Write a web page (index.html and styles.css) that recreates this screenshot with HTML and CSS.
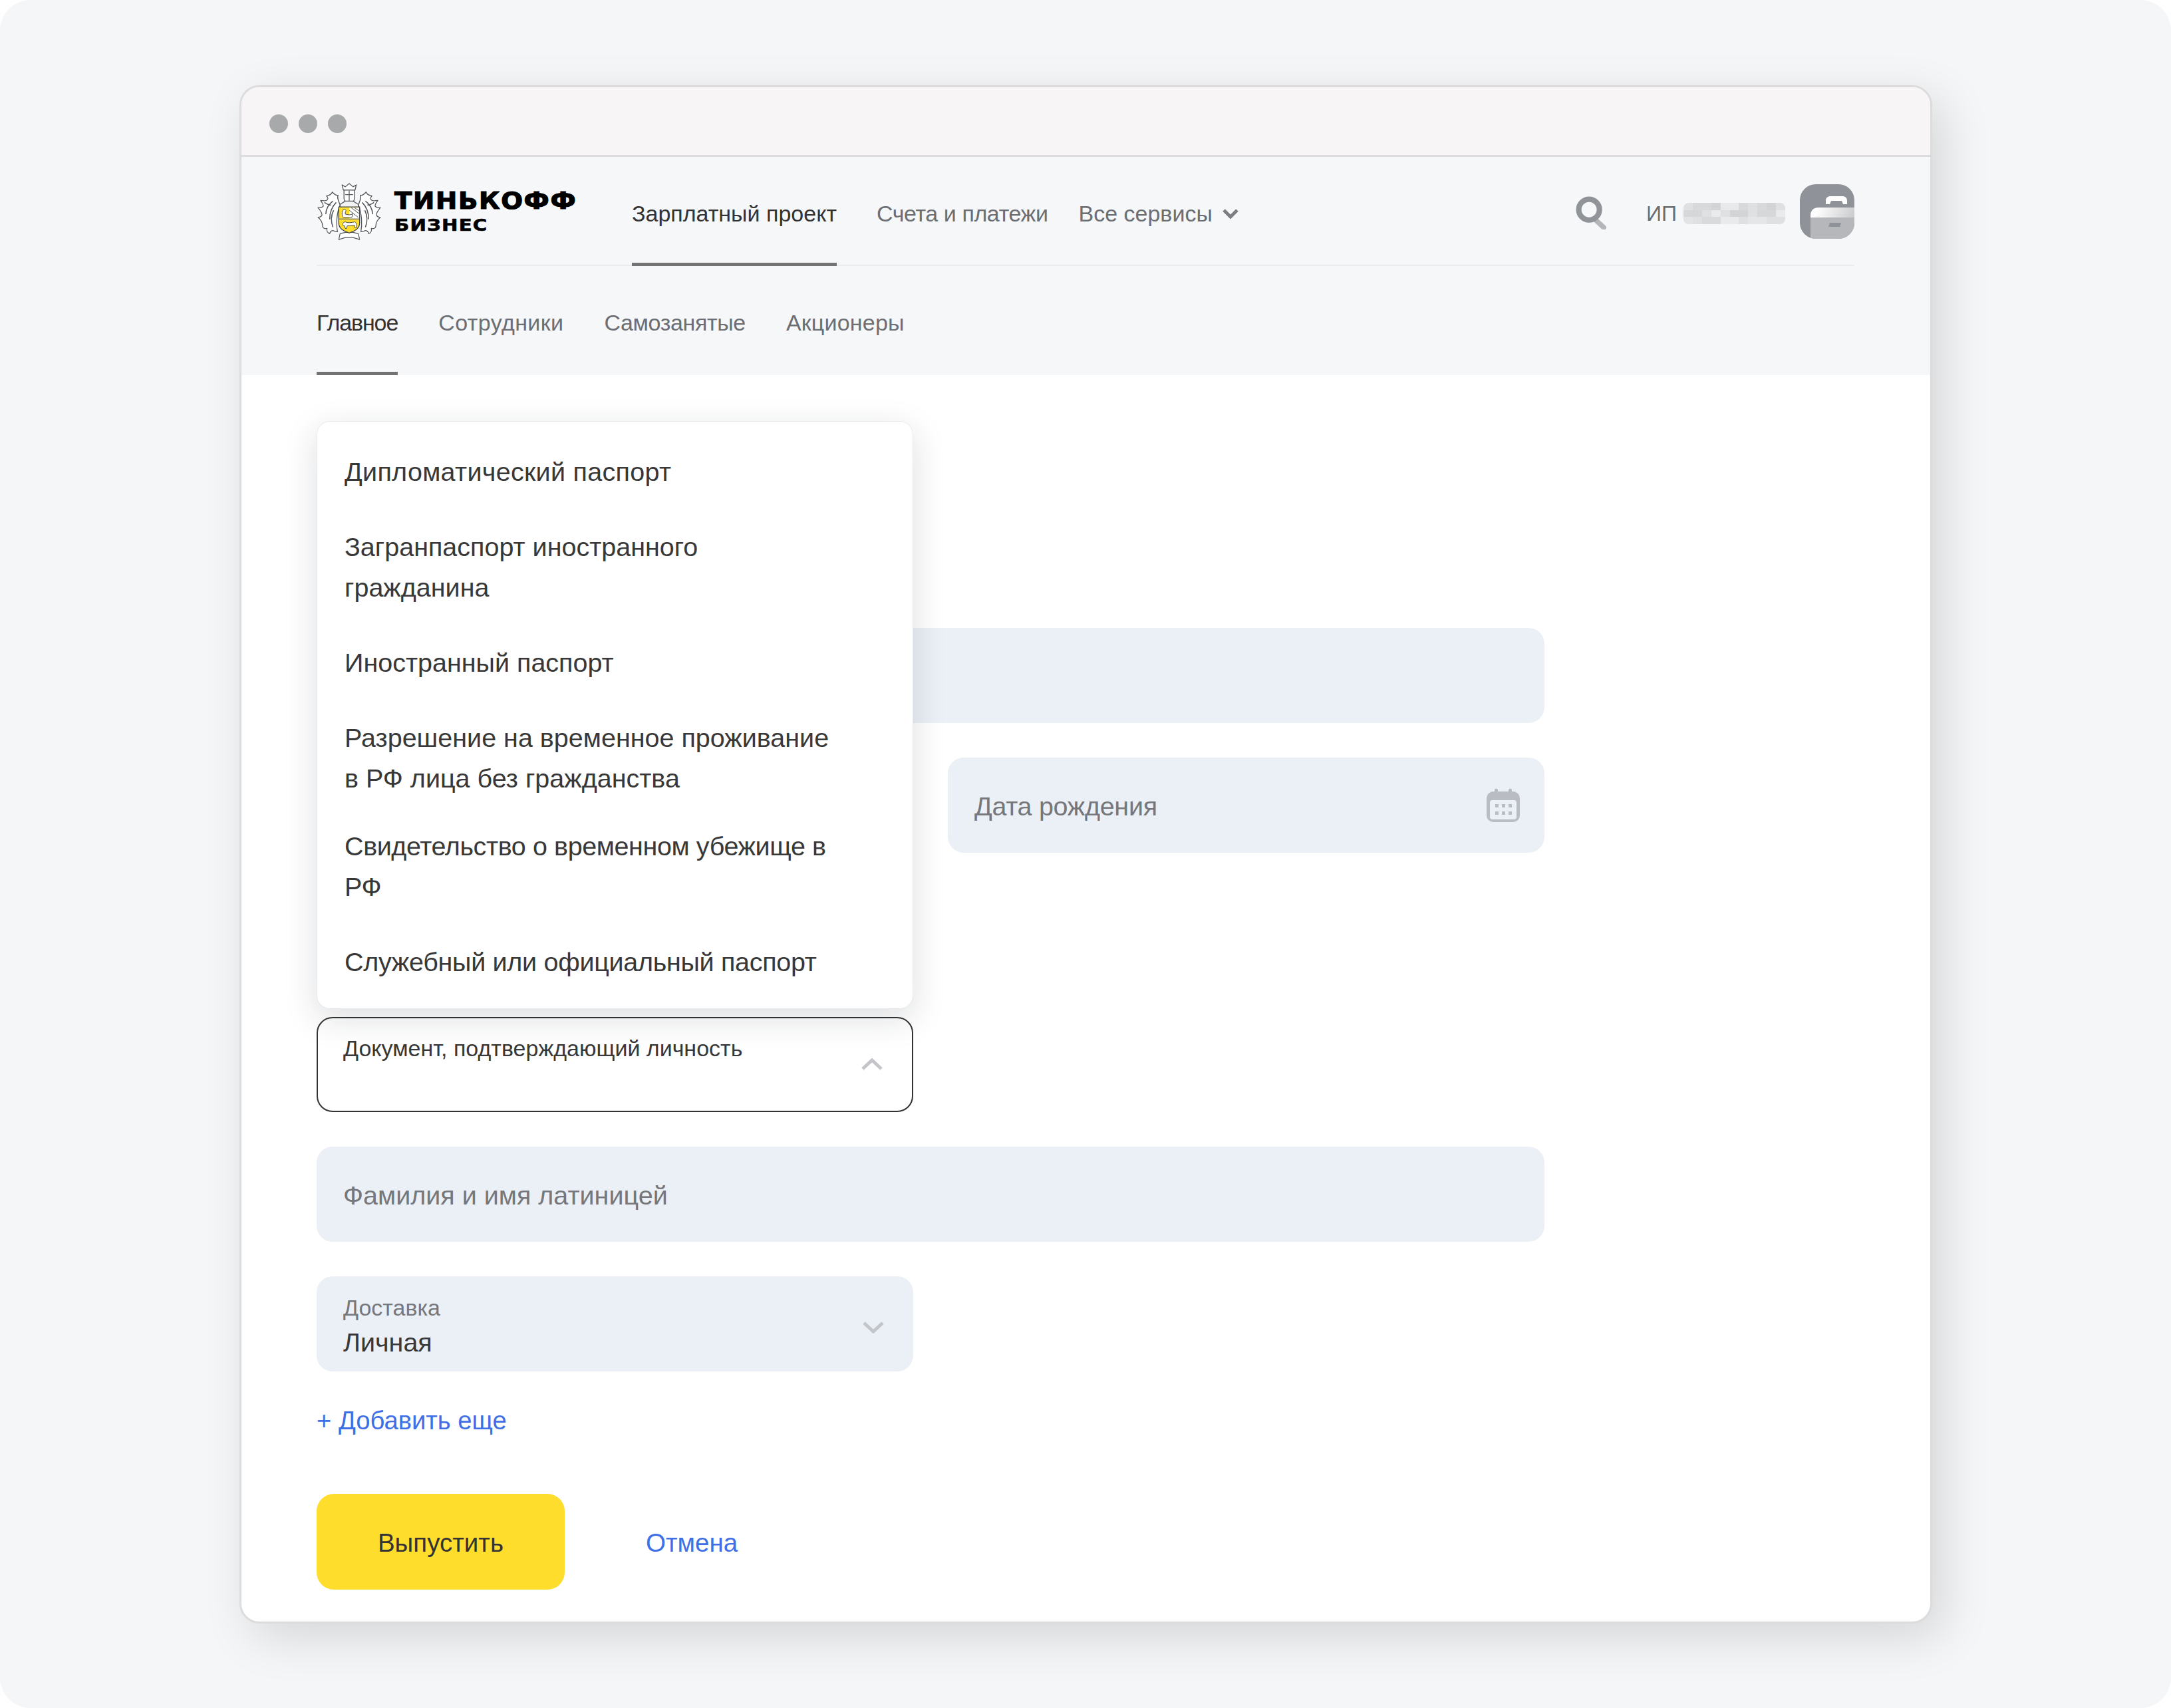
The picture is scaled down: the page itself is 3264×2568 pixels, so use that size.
FILE: index.html
```html
<!DOCTYPE html>
<html lang="ru">
<head>
<meta charset="utf-8">
<title>Тинькофф Бизнес</title>
<link rel="stylesheet" href="styles.css">
</head>
<body>
<div class="page">
  <div class="window">
    <div class="titlebar"><span class="dot"></span><span class="dot"></span><span class="dot"></span></div>
    <header class="topnav">
      <div class="logo">
        <svg class="emblem" viewBox="0 0 100 90" width="98" height="88">
          <g fill="#fff" stroke="#55585c" stroke-width="1.3" stroke-linejoin="round">
            <g id="leaf">
              <path d="M36 34 C33 27 31 22 33 19 C29 20 27 17 24 14 C23 18 20 19 15 20 C18 23 18 25 15 27 C13 28 9 27 6 27 C8 30 11 33 10 36 C8 38 6 39 2 38 C5 42 9 46 8 50 C6 53 4 53 2 53 C7 57 9 61 9 66 C9 69 12 71 16 70 C15 74 17 77 20 78 C21 74 24 72 27 74 L32 75 C30 65 30 48 36 34Z"/>
              <path d="M30 30 C24 36 20 46 20 56 M25 28 C19 32 14 40 14 48 M26 42 C22 50 22 60 25 68 M12 30 C16 33 19 34 22 34" fill="none" stroke-width="1.6"/>
            </g>
            <use href="#leaf" transform="matrix(-1 0 0 1 100 0)"/>
            <path d="M41 11 L39 3 L44 6 L50 1 L56 6 L61 3 L59 11Z"/>
            <path d="M42 11 H58 V24 C58 29 53 32 50 32 C47 32 42 29 42 24Z"/>
            <path d="M44 18 H56 M50 12 V31" fill="none"/>
            <path d="M36 33 L44 28 H56 L64 33 V40 H36Z" fill="#f2f2f2"/>
            <path d="M36 78 L44 76 H56 L64 78 L66 87 L56 84 H44 L34 87Z"/>
          </g>
          <path d="M34 37 H66 V62 C66 72 55 75 50 77 C45 75 34 72 34 62Z" fill="#ffdd2d" stroke="#45484c" stroke-width="1.4"/>
          <path d="M50 38 H65 V55 H50Z" fill="#fff"/>
          <path d="M53 38 L65 47 M58 38 L65 43 M50 42 L64 53" stroke="#777" stroke-width="1.1"/>
          <path d="M34.7 55.5 H65.3" stroke="#77797c" stroke-width="1.4"/>
          <path d="M41 41 C45 40 46 43 44 45 L44 48 C48 49 52 50 56 47 L54 53 L41 53 C38 50 39 44 41 41Z" fill="#fff" stroke="#45484c" stroke-width="1"/>
          <path d="M41 66 C39 63 41 60 44 60 C48 62 54 61 58 60 C61 60 62 64 61 69 L59 69 L58 65 L47 66 L46 70 L44 70 L43 66 Z" fill="#fff" stroke="#45484c" stroke-width="1"/>
        </svg>
        <div class="wordmark"><span class="brand">ТИНЬКОФФ</span><span class="brand-sub">БИЗНЕС</span></div>
      </div>
      <nav class="mainnav">
        <a class="tab active tab-main">Зарплатный проект</a>
        <a class="tab tab-link">Счета и платежи</a>
        <a class="tab tab-services">Все сервисы
          <svg class="nav-chevron" viewBox="0 0 26 17" width="26" height="17"><path d="M3 3 L13 13 L23 3" fill="none" stroke="#7d7f83" stroke-width="5"/></svg>
        </a>
      </nav>
      <div class="account">
        <svg class="search" viewBox="0 0 48 52" width="46" height="50">
          <path d="M31 37 L44 49" stroke="#b3b5b8" stroke-width="8" stroke-linecap="round"/>
          <circle cx="21" cy="21" r="16.2" fill="none" stroke="#909398" stroke-width="8.5"/>
        </svg>
        <span class="org">ИП</span>
        <svg class="mosaic" viewBox="0 0 11 3" width="153" height="32" preserveAspectRatio="none" shape-rendering="crispEdges">
          <rect width="11" height="3" fill="#dfe0e2"/>
          <rect x="1" width="2" height="1" fill="#d8d9da"/><rect x="3" width="1" height="1" fill="#d3d4d6"/><rect x="4" width="2" height="1" fill="#e8e9ea"/><rect x="6" width="1" height="1" fill="#d8d9da"/><rect x="8" width="1" height="1" fill="#d8d9da"/><rect x="9" width="1" height="1" fill="#d3d4d6"/>
          <rect y="1" width="2" height="1" fill="#d6d7d9"/><rect x="3" y="1" width="1" height="1" fill="#e9eaeb"/><rect x="5" y="1" width="2" height="1" fill="#d3d4d6"/><rect x="8" y="1" width="2" height="1" fill="#d6d7d9"/><rect x="10" y="1" width="1" height="1" fill="#e9eaeb"/>
          <rect y="2" width="1" height="1" fill="#e3e4e6"/><rect x="2" y="2" width="2" height="1" fill="#d9dadb"/><rect x="4" y="2" width="2" height="1" fill="#e9eaeb"/><rect x="7" y="2" width="2" height="1" fill="#e5e6e7"/>
        </svg>
        <svg class="avatar" viewBox="0 0 82 82" width="82" height="82">
          <defs>
            <clipPath id="avatar-clip"><rect width="82" height="82" rx="24"/></clipPath>
            <linearGradient id="lid" x1="0" y1="0" x2="1" y2="0.3"><stop offset="0.15" stop-color="#fff"/><stop offset="1" stop-color="#c9cacc"/></linearGradient>
          </defs>
          <g clip-path="url(#avatar-clip)">
            <rect width="82" height="82" fill="#8f9298"/>
            <path d="M39 30 V25 C39 20 42 18 46 18 H64 C68 18 71 20 71 25 V30 H65 L63 25 H47 L45 30Z" fill="#fff"/>
            <path d="M16 82 V47 C16 39 21 35 28 35 H82 V50 H16Z" fill="url(#lid)"/>
            <rect x="16" y="50" width="66" height="32" fill="#b5b7ba"/>
            <path d="M45 58 H62 L60 64 H43Z" fill="#8f9298"/>
          </g>
        </svg>
      </div>
    </header>
    <nav class="subnav">
      <a class="subtab active sp-main">Главное</a>
      <a class="subtab sp-staff">Сотрудники</a>
      <a class="subtab sp-self">Самозанятые</a>
      <a class="subtab sp-share">Акционеры</a>
    </nav>
    <main class="content">
      <form class="form">
        <div class="field wide"></div>
        <div class="field"></div>
        <div class="field"><span class="placeholder sp-date">Дата рождения</span>
          <svg class="calendar" viewBox="0 0 50 51" width="50" height="51">
            <path d="M12 5 V3 a2.5 2.5 0 0 1 5 0 V5 H33 V3 a2.5 2.5 0 0 1 5 0 V5 H40 A10 10 0 0 1 50 15 V41 A10 10 0 0 1 40 51 H10 A10 10 0 0 1 0 41 V15 A10 10 0 0 1 10 5Z" fill="#b9bdc3"/>
            <rect x="5" y="18" width="40" height="29" rx="4" fill="#ebf0f6"/>
            <g fill="#b9bdc3"><rect x="13" y="24" width="5" height="5"/><rect x="23" y="24" width="5" height="5"/><rect x="33" y="24" width="5" height="5"/><rect x="13" y="35" width="5" height="5"/><rect x="23" y="35" width="5" height="5"/><rect x="33" y="35" width="5" height="5"/></g>
          </svg>
        </div>
        <div class="row-spacer wide"></div>
        <div class="select-wrap">
          <ul class="menu">
            <li class="menu-item sp-loose">Дипломатический паспорт</li>
            <li class="menu-item">Загранпаспорт иностранного гражданина</li>
            <li class="menu-item">Иностранный паспорт</li>
            <li class="menu-item tight-bottom">Разрешение на временное проживание<br>в РФ лица без гражданства</li>
            <li class="menu-item tight-top sp-tighter">Свидетельство о временном убежище в РФ</li>
            <li class="menu-item sp-tight">Служебный или официальный паспорт</li>
          </ul>
          <div class="select">
            <span class="select-label">Документ, подтверждающий личность</span>
            <svg class="chevron chevron-up" viewBox="0 0 32 18" width="32" height="18"><path d="M2 16 L16 3 L30 16" fill="none" stroke="#c3c5c8" stroke-width="5"/></svg>
          </div>
        </div>
        <div class="row-end"></div>
        <div class="field wide"><span class="placeholder">Фамилия и имя латиницей</span></div>
        <div class="field stacked">
          <span class="small-label">Доставка</span>
          <span class="value">Личная</span>
          <svg class="chevron chevron-down" viewBox="0 0 32 18" width="32" height="18"><path d="M2 2 L16 15 L30 2" fill="none" stroke="#c3c5c8" stroke-width="5"/></svg>
        </div>
      </form>
      <a class="add-more">+ Добавить еще</a>
      <div class="actions">
        <button class="primary" type="button">Выпустить</button>
        <a class="cancel">Отмена</a>
      </div>
    </main>
  </div>
</div>
</body>
</html>
```
FILE: styles.css
```css
* { box-sizing: border-box; }
html, body { margin: 0; padding: 0; background: #fff; }
body { font-family: "Liberation Sans", Arial, sans-serif; color: #333; }
.page { width: 3264px; height: 2568px; background: #f5f6f8; border-radius: 46px; padding: 128px 0 0 360px; overflow: hidden; }
.window { width: 2545px; height: 2313px; border: 3px solid #dcdcdc; border-radius: 30px; background: #fff; box-shadow: 17px 21px 72px rgba(0,0,0,.13); overflow: hidden; }
.titlebar { height: 105px; background: #f7f5f6; border-bottom: 3px solid #dcdcdc; display: flex; align-items: center; gap: 16px; padding: 8px 0 0 42px; }
.dot { width: 28px; height: 28px; border-radius: 50%; background: #a8a9aa; }
.topnav { height: 164px; background: #f6f7f9; display: flex; align-items: stretch; padding: 0 114px 0 113px; position: relative; }
.topnav::after { content: ""; position: absolute; left: 113px; right: 114px; bottom: 0; height: 2px; background: #ebecee; }
.logo { display: flex; align-items: center; width: 474px; padding-top: 2px; flex: none; }
.emblem { flex: none; margin-right: 19px; }
.wordmark { display: flex; flex-direction: column; align-items: flex-start; color: #000; font-family: "DejaVu Sans", sans-serif; font-weight: 700; line-height: 1; }
.brand { font-size: 36px; letter-spacing: 1.6px; line-height: 36px; -webkit-text-stroke: 1.2px #000; white-space: nowrap; transform: scaleX(1.07); transform-origin: left center; }
.brand-sub { font-size: 25px; letter-spacing: 1px; line-height: 30px; -webkit-text-stroke: .6px #000; margin-top: 4px; transform: scaleX(1.17); transform-origin: left center; }
.mainnav { display: flex; align-items: stretch; }
.tab { display: flex; align-items: center; font-size: 34px; color: #6b6e73; padding-top: 12px; white-space: nowrap; border-bottom: 5px solid transparent; position: relative; z-index: 1; }
.tab.active { color: #333; border-bottom-color: #737373; }
.tab-main { margin-right: 60px; }
.tab-link { margin-right: 46px; letter-spacing: -.4px; }
.nav-chevron { margin-left: 14px; }
.account { margin-left: auto; display: flex; align-items: center; }
.search { margin-right: 60px; margin-top: 4px; }
.org { font-size: 32px; color: #6b6e73; margin-right: 10px; margin-top: 6px; }
.mosaic { border-radius: 8px; margin-right: 22px; margin-top: 6px; }
.subnav { height: 164px; background: #f6f7f9; display: flex; gap: 61px; padding-left: 113px; }
.subtab { display: flex; align-items: center; font-size: 34px; color: #6b6e73; padding-top: 11px; white-space: nowrap; border-bottom: 5px solid transparent; }
.subtab.active { color: #333; border-bottom-color: #737373; }
.sp-main { letter-spacing: -1.1px; }
.sp-staff { letter-spacing: .4px; }
.sp-self { letter-spacing: -.35px; }
.sp-share { letter-spacing: .2px; }
.content { padding: 380px 110px 0 113px; background: #fff; }
.form { display: grid; grid-template-columns: 897px 897px; column-gap: 52px; grid-auto-rows: 143px; row-gap: 52px; }
.wide { grid-column: 1 / -1; }
.field { background: #ebf0f6; border-radius: 24px; display: flex; align-items: center; padding: 4px 37px 0 40px; position: relative; font-size: 39.5px; }
.placeholder { color: #75777b; }
.sp-date { letter-spacing: -.3px; }
.calendar { margin-left: auto; margin-top: -4px; }
.select-wrap { position: relative; }
.menu { position: absolute; left: 0; right: 0; bottom: calc(100% + 12px); margin: 0; padding: 19px 0 13px; list-style: none; background: #fff; border: 1px solid #e6e8eb; border-radius: 20px; box-shadow: 0 14px 50px rgba(30,35,45,.15); z-index: 2; }
.menu-item { font-size: 39.5px; line-height: 61px; padding: 26px 100px 26px 41px; color: #383838; }
.tight-bottom { padding-bottom: 21px; }
.tight-top { padding-top: 20px; }
.sp-loose { letter-spacing: .3px; }
.sp-tight { letter-spacing: -.3px; }
.sp-tighter { letter-spacing: -.4px; }
.select { height: 143px; border: 2px solid #333; border-radius: 24px; background: #fff; padding: 26px 38px; position: relative; }
.select-label { font-size: 34px; line-height: 38px; color: #383838; display: block; }
.chevron { position: absolute; right: 44px; }
.chevron-up { top: 60px; }
.chevron-down { top: 68px; }
.stacked { flex-direction: column; align-items: flex-start; justify-content: flex-start; padding-top: 28px; }
.small-label { font-size: 34px; line-height: 38px; color: #75777b; }
.value { font-size: 39.5px; line-height: 50px; color: #383838; margin-top: 8px; }
.add-more { display: block; font-size: 38.2px; line-height: 46px; color: #3e6fe6; margin-top: 51px; }
.actions { display: flex; align-items: center; margin-top: 87px; }
.primary { width: 373px; height: 144px; background: #ffdd2d; border: 0; border-radius: 26px; font: inherit; font-size: 38.5px; color: #333; padding: 4px 0 0; }
.cancel { font-size: 38.5px; color: #3e6fe6; margin: 4px 0 0 122px; }
```
